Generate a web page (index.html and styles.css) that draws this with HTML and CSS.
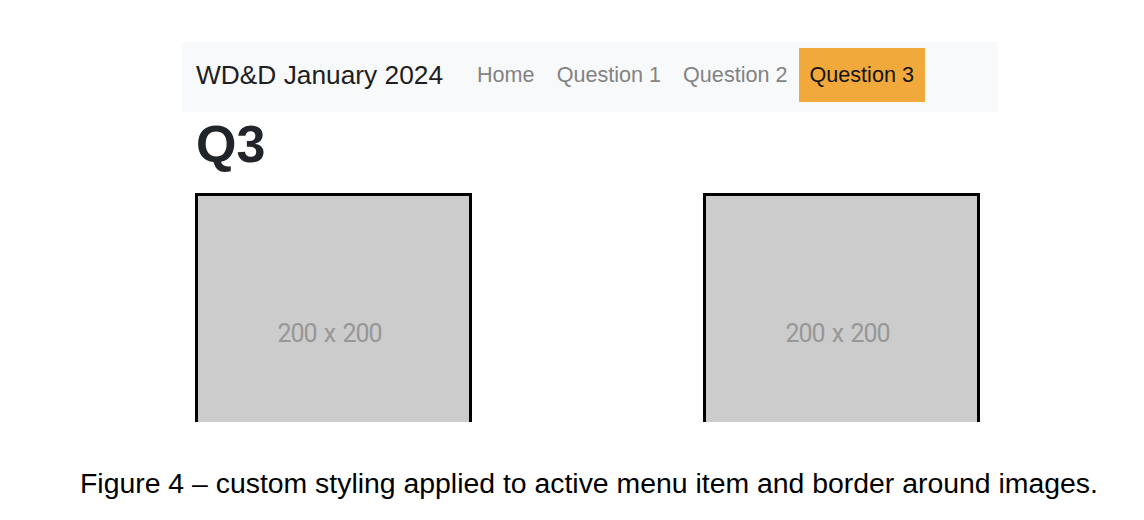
FILE: index.html
```html
<!DOCTYPE html>
<html>
<head>
<meta charset="utf-8">
<link rel="stylesheet" href="styles.css">
</head>
<body>
<div class="figure">
  <div class="screen">
    <nav class="navbar">
      <span class="brand">WD&amp;D January 2024</span>
      <a class="nav-link">Home</a>
      <a class="nav-link">Question 1</a>
      <a class="nav-link">Question 2</a>
      <a class="nav-link active">Question 3</a>
    </nav>
    <main class="content">
      <h1 class="title">Q3</h1>
      <div class="images">
        <div class="ph">200 x 200</div>
        <div class="ph">200 x 200</div>
      </div>
    </main>
  </div>
  <p class="caption">Figure 4 – custom styling applied to active menu item and border around images.</p>
</div>
</body>
</html>
```

FILE: styles.css
```css
html, body {
  margin: 0;
  padding: 0;
  background: #ffffff;
}
body {
  font-family: "Liberation Sans", Arial, sans-serif;
  width: 1144px;
  height: 520px;
  overflow: hidden;
}
.figure {
  padding-top: 42px;
}
.screen {
  margin-left: 182px;
  width: 816px;
  height: 380px;
  overflow: hidden;
}
.navbar {
  height: 70px;
  background: #f8f9fa;
  display: flex;
  align-items: center;
  padding: 0 14px 4px;
  box-sizing: border-box;
}
.brand {
  font-size: 26.3px;
  color: #1e1e1e;
  margin-right: 23px;
}
.nav-link {
  font-size: 21.6px;
  color: #838383;
  height: 54px;
  padding: 0 11px;
  display: flex;
  align-items: center;
}
.nav-link.active {
  background: #f1a93b;
  color: #141414;
}
.content {
  padding-left: 13px;
  padding-right: 18px;
}
.title {
  font-size: 52px;
  font-weight: bold;
  color: #212529;
  line-height: 62px;
  margin: 1px 0 18px 1px;
}
.images {
  display: flex;
  justify-content: space-between;
}
.ph {
  width: 271px;
  height: 268px;
  box-sizing: content-box;
  border: 3px solid #000;
  background: #cccccc;
  color: #979797;
  font-family: Roboto, "Liberation Sans", sans-serif;
  font-size: 25px;
  letter-spacing: -1px;
  word-spacing: 2px;
  display: flex;
  align-items: center;
  justify-content: center;
  padding-top: 3px;
}
.ph::before {
  content: "";
  width: 8px;
  order: 2;
}
.caption {
  margin: 0;
  padding: 45px 0 0 80px;
  font-size: 28.4px;
  color: #000;
  white-space: nowrap;
}
```
